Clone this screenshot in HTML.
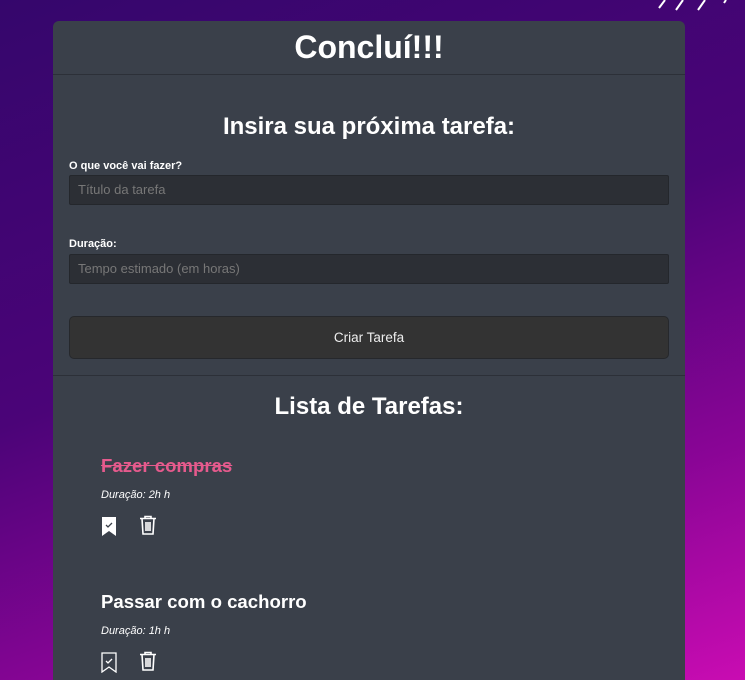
<!DOCTYPE html>
<html style="height:680px;overflow:hidden"><head><meta charset="utf-8"><style>
*{margin:0;padding:0;box-sizing:border-box}
body{width:745px;height:680px;overflow:hidden;font-family:"Liberation Sans",Arial,sans-serif;color:#fff;
background:linear-gradient(160deg,#35066c 0%,#4b0478 45%,#8a0596 75%,#c90cb2 100%);position:relative}
.card{position:absolute;left:53px;top:21px;width:632px;height:659px;background:#3a404a;border-radius:6px 6px 0 0;overflow:hidden}
.abs{position:absolute}
h1{position:absolute;left:0;width:632px;top:6px;text-align:center;font-size:32px;font-weight:bold;line-height:40px}
.hr{position:absolute;left:0;width:632px;height:1px;background:#2c3038}
h2{position:absolute;left:0;width:632px;text-align:center;font-size:24px;font-weight:bold;line-height:30px}
.lbl{position:absolute;left:16px;font-size:11px;font-weight:bold}
.inp{position:absolute;left:16px;width:600px;height:30px;background:#2c2f35;border:1px solid #24272c;border-radius:2px;color:#777;font-size:13px;line-height:28px;padding-left:8px}
.btn{position:absolute;left:16px;top:295px;width:600px;height:43px;background:#333;border:1px solid #26282c;border-radius:5px;text-align:center;font-size:13.5px;line-height:41px;color:#eee}
.tt{position:absolute;left:48px;font-size:18.6px;font-weight:bold;line-height:24px}
.du{position:absolute;left:48px;font-size:11px;font-style:italic;line-height:14px}
</style></head><body>
<svg class="abs" style="left:650px;top:0" width="95" height="14"><g stroke="#fff" stroke-width="2"><line x1="15" y1="0" x2="9" y2="8"/><line x1="33" y1="0" x2="26" y2="10"/><line x1="55" y1="0" x2="48" y2="10"/><line x1="76" y1="0" x2="74" y2="3"/></g></svg>
<div class="card">
<h1>Concluí!!!</h1>
<div class="hr" style="top:53px"></div>
<h2 style="top:91px">Insira sua próxima tarefa:</h2>
<div class="lbl" style="top:139px">O que você vai fazer?</div>
<div class="inp" style="top:154px">Título da tarefa</div>
<div class="lbl" style="top:217px">Duração:</div>
<div class="inp" style="top:233px">Tempo estimado (em horas)</div>
<div class="btn">Criar Tarefa</div>
<div class="hr" style="top:354px"></div>
<h2 style="top:371px">Lista de Tarefas:</h2>
<div class="tt" style="top:433px;color:#e65a8d;text-decoration:line-through">Fazer compras</div>
<div class="du" style="top:467px">Duração: 2h h</div>
<svg class="abs" style="left:48px;top:495px" width="16" height="21" viewBox="0 0 16 21"><path d="M1 1H15V20L8 15L1 20Z" fill="#fff"/><path d="M5 9L7 11L11 7" stroke="#3a404a" stroke-width="1.3" fill="none"/></svg>
<svg class="abs" style="left:86px;top:494px" width="18" height="20" viewBox="0 0 18 20" fill="none" stroke="#fff" stroke-width="1.6"><path d="M1 3.5H17M6 3.5V1.5H12V3.5M3 3.5L4 19H14L15 3.5M7 7V16M9 7V16M11 7V16"/></svg>
<div class="tt" style="top:569px">Passar com o cachorro</div>
<div class="du" style="top:603px">Duração: 1h h</div>
<svg class="abs" style="left:48px;top:631px" width="16" height="21" viewBox="0 0 16 21"><path d="M1 1H15V20L8 15L1 20Z" fill="none" stroke="#fff" stroke-width="1.3"/><path d="M5 9L7 11L11 7" stroke="#fff" stroke-width="1.3" fill="none"/></svg>
<svg class="abs" style="left:86px;top:630px" width="18" height="20" viewBox="0 0 18 20" fill="none" stroke="#fff" stroke-width="1.6"><path d="M1 3.5H17M6 3.5V1.5H12V3.5M3 3.5L4 19H14L15 3.5M7 7V16M9 7V16M11 7V16"/></svg>
</div>
</body></html>
